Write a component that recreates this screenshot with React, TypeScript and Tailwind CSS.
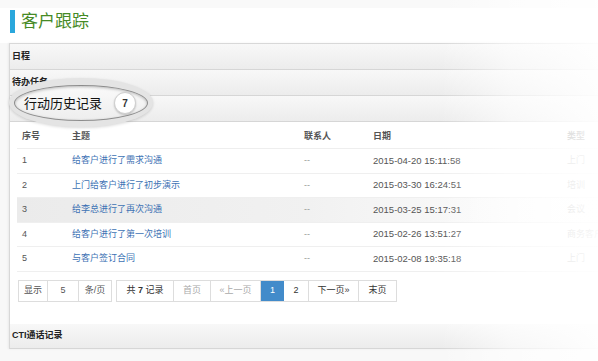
import React from "react";

const font = { fontFamily: '"Liberation Sans", "Noto Sans CJK SC", sans-serif' };

function Strip({ children, h = "h-[26px]" }: { children?: React.ReactNode; h?: string }) {
  return (
    <div
      className={`${h} flex items-center pl-[2px] border-b border-[#d6d6d6] bg-linear-to-b from-[#f8f8f8] to-[#ececec] text-[9px] font-bold text-[#222]`}
    >
      {children}
    </div>
  );
}

const rows = [
  { n: "1", t: "给客户进行了需求沟通", d: "2015-04-20 15:11:58", k: "上门" },
  { n: "2", t: "上门给客户进行了初步演示", d: "2015-03-30 16:24:51", k: "培训" },
  { n: "3", t: "给李总进行了再次沟通", d: "2015-03-25 15:17:31", k: "会议" },
  { n: "4", t: "给客户进行了第一次培训", d: "2015-02-26 13:51:27", k: "商务客户" },
  { n: "5", t: "与客户签订合同", d: "2015-02-08 19:35:18", k: "上门" },
];

const cols = "grid grid-cols-[55px_232px_69px_194px_1fr] items-center whitespace-nowrap";

export default function App() {
  return (
    <div className="relative w-[598px] h-[361px] overflow-hidden bg-[#f8f8f8]" style={font}>
      <div className="h-[8px] bg-[#f9f9f9]" />
      <div className="h-[35px] bg-white flex items-start pl-[10px] pt-[2px]">
        <div className="w-[5px] h-[23px] bg-[#2aa7dc]" />
        <div className="ml-[6px] text-[17px] leading-[23px] text-[#468a26]">客户跟踪</div>
      </div>
      <div className="ml-[9px] border-l border-t border-[#d8d8d8] bg-white shadow-[-1px_0_2px_rgba(0,0,0,0.06)]">
        <Strip>日程</Strip>
        <Strip>待办任务</Strip>
        <Strip />
        <div className="h-[202px] pl-[7px] pt-[4px]">
          <div className={`${cols} h-[23px] border-b border-[#eeeeee] text-[9px] font-bold text-[#555]`}>
            <div className="pl-[5px]">序号</div>
            <div>主题</div>
            <div>联系人</div>
            <div>日期</div>
            <div>类型</div>
          </div>
          {rows.map((r, i) => (
            <div
              key={r.n}
              className={`${cols} h-[24.5px] border-b border-[#efefef] text-[9px] ${
                i === 2 ? "bg-linear-to-r from-[#ebebeb] via-[#f1f1f1] to-white" : ""
              }`}
            >
              <div className="pl-[5px] text-[#555]">{r.n}</div>
              <div className="text-[#3d72b4]">{r.t}</div>
              <div className="text-[#999]">--</div>
              <div className="text-[#555] text-[9.5px]">{r.d}</div>
              <div className="text-[#999]">{r.k}</div>
            </div>
          ))}
          <div className="flex items-center gap-[4px] mt-[8px] ml-[1px] text-[9px]">
            <div className="flex h-[22px] border border-[#dddddd] text-[#555]">
              <div className="w-[29px] flex items-center justify-center border-r border-[#dddddd]">显示</div>
              <div className="w-[31px] flex items-center justify-center border-r border-[#dddddd]">5</div>
              <div className="w-[32px] flex items-center justify-center">条/页</div>
            </div>
            <div className="flex h-[22px] border border-[#dddddd] text-[#333]">
              <div className="w-[57px] flex items-center justify-center border-r border-[#dddddd]">
                共&nbsp;<b>7</b>&nbsp;记录
              </div>
              <div className="w-[37px] flex items-center justify-center border-r border-[#dddddd] text-[#aaa]">首页</div>
              <div className="w-[50px] flex items-center justify-center border-r border-[#dddddd] text-[#aaa]">«上一页</div>
              <div className="w-[23px] flex items-center justify-center bg-[#428bca] text-white">1</div>
              <div className="w-[25px] flex items-center justify-center border-r border-[#dddddd]">2</div>
              <div className="w-[50px] flex items-center justify-center border-r border-[#dddddd]">下一页»</div>
              <div className="w-[37px] flex items-center justify-center">末页</div>
            </div>
          </div>
        </div>
        <Strip h="h-[25px]">CTI通话记录</Strip>
      </div>

      {/* highlight ellipse */}
      <div className="absolute left-[9px] top-[78px] w-[144px] h-[49px] rounded-[50%] bg-[#e4e4e4] shadow-[0_1px_3px_rgba(0,0,0,0.15)]" />
      <div className="absolute left-[14px] top-[85px] w-[134px] h-[36px] rounded-[50%] border-[1.5px] border-[#8c8c8c] bg-linear-to-b from-[#fafafa] to-[#eeeeee] shadow-[inset_0_1px_3px_rgba(0,0,0,0.25)] flex items-center pl-[9px]">
        <span className="text-[13px] text-[#111] leading-none">行动历史记录</span>
        <span className="ml-[12px] w-[22px] h-[22px] rounded-full bg-white border border-[#cfcfcf] shadow-[0_1px_2px_rgba(0,0,0,0.2)] flex items-center justify-center text-[10px] font-bold text-[#333]">
          7
        </span>
      </div>

      {/* right fade */}
      <div className="absolute top-0 bottom-0 left-[440px] right-0 bg-linear-to-r from-[rgba(255,255,255,0)] via-[rgba(255,255,255,0.6)] via-45% to-[rgba(255,255,255,0.93)] pointer-events-none" />
    </div>
  );
}
